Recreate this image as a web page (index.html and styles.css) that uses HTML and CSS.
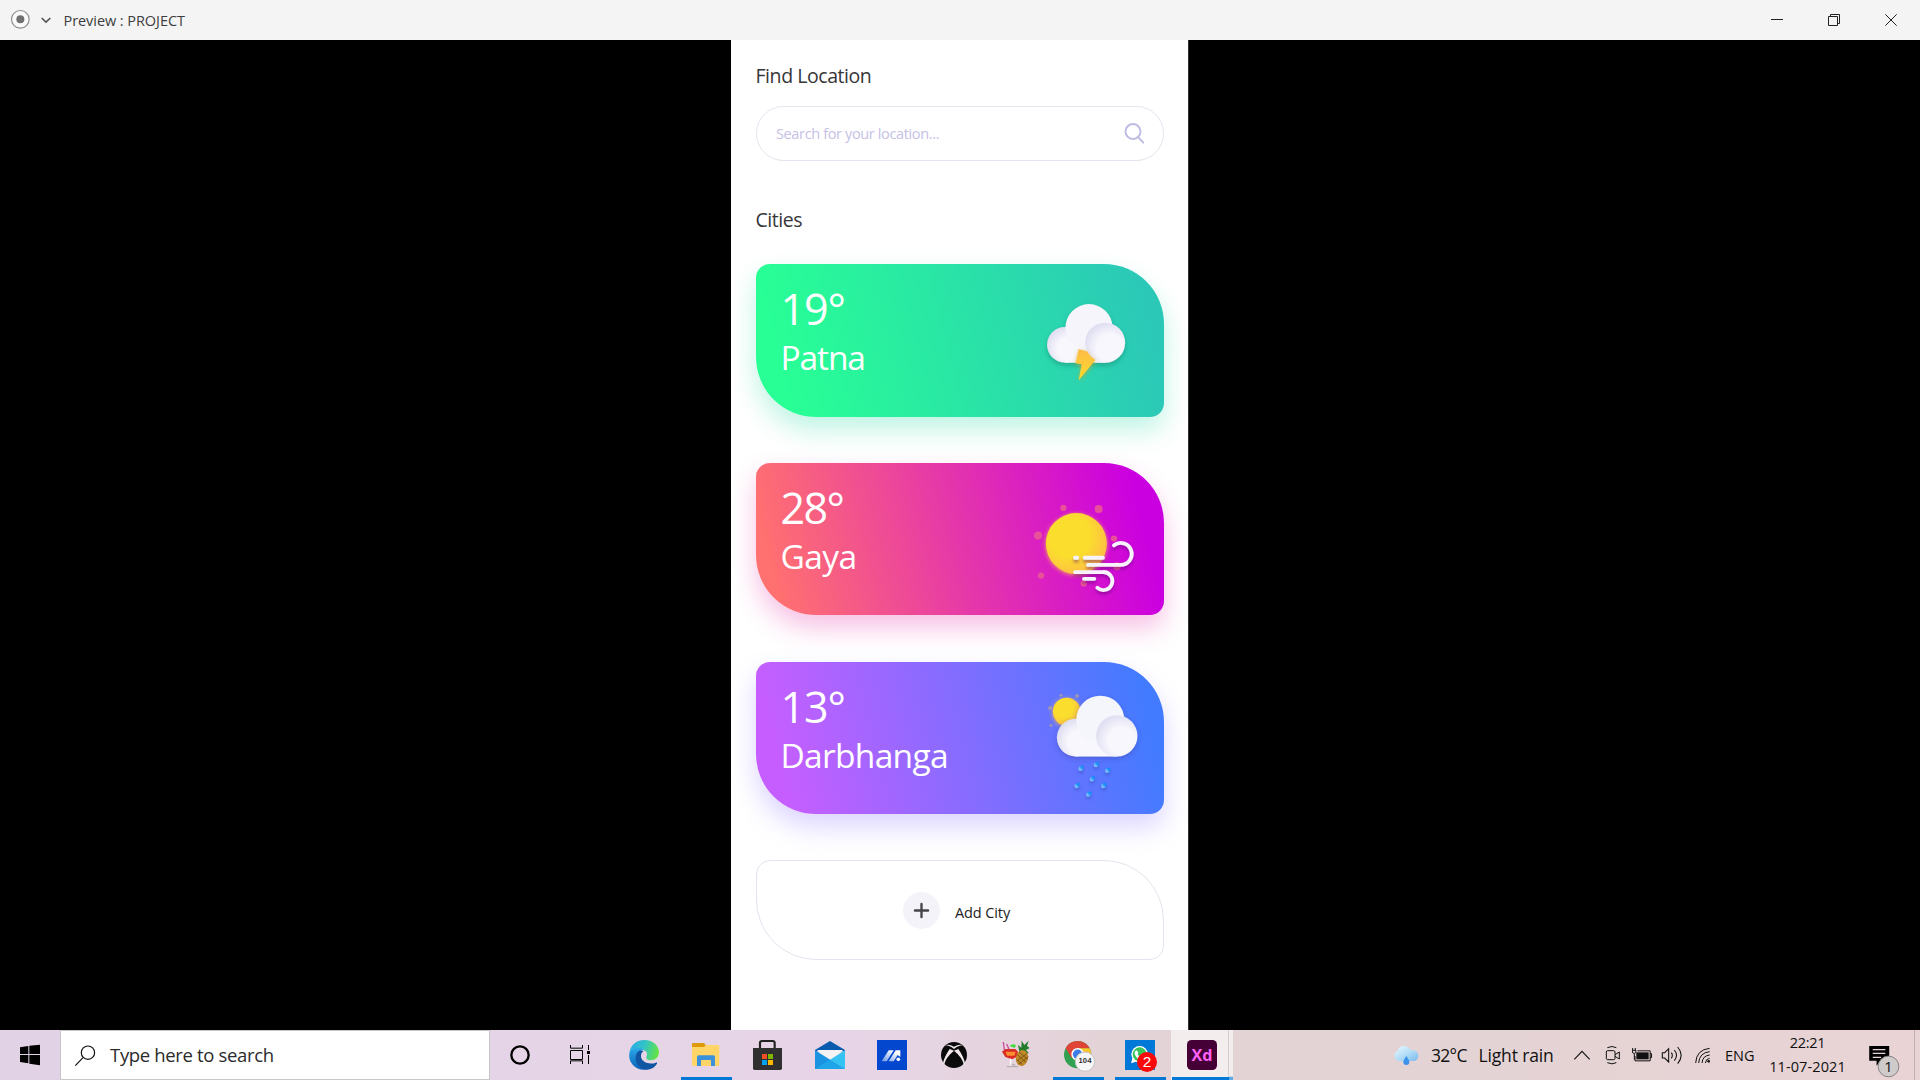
FILE: index.html
```html
<!DOCTYPE html>
<html lang="en">
<head>
<meta charset="utf-8">
<title>Preview : PROJECT</title>
<link rel="stylesheet" href="styles.css">
</head>
<body>
<header class="titlebar">
  <svg class="titlebar-tools" viewBox="0 0 180 120">
    <circle cx="61" cy="58" r="26.5" fill="#fafafa" stroke="#8b8b8b" stroke-width="3.4"/>
    <circle cx="61" cy="58" r="12" fill="#707070"/>
    <path d="M125 54l13 12 13-12" fill="none" stroke="#555" stroke-width="5"/>
  </svg>
  <span class="titlebar-name">Preview : PROJECT</span>
  <svg class="window-controls" viewBox="0 0 600 120" fill="none" stroke="#222" stroke-width="3">
    <path d="M153 58.500H189"/>
    <path d="M325.500 49.500h27v27h-27zM331.500 49v-5.500h27v27h-5"/>
    <path d="M496 43l34 34M530 43l-34 34"/>
  </svg>
</header>

<main class="stage">
  <section class="phone">
    <h2 class="heading">Find Location</h2>
    <div class="search">
      <span class="search-hint">Search for your location...</span>
      <svg class="search-icon" viewBox="1197 257 69 69" fill="none" stroke="#bdbbe2" stroke-width="5.800" stroke-linecap="round">
        <circle cx="1227" cy="285.500" r="22.500"/><path d="M1243 303l15 16"/>
      </svg>
    </div>
    <h2 class="heading heading-cities">Cities</h2>

    <div class="cards">
      <article class="card card-green">
        <div class="card-text"><div class="temp">19°</div><div class="city city-patna">Patna</div></div>
        <svg class="card-icon" viewBox="900 42 360 458">
          <defs>
            <radialGradient id="puff" cx=".62" cy=".62" r=".65"><stop offset=".5" stop-color="#f8f7fd"/><stop offset="1" stop-color="#dfdef1"/></radialGradient>
            <linearGradient id="bolt" x1="0" y1="0" x2="0" y2="1"><stop offset="0" stop-color="#fdbb45"/><stop offset="1" stop-color="#fbdc2c"/></linearGradient>
            <filter id="soft" x="-30%" y="-30%" width="160%" height="160%"><feDropShadow dx="0" dy="8" stdDeviation="8" flood-color="#16725f" flood-opacity=".42"/></filter>
            <filter id="boltglow" x="-60%" y="-40%" width="220%" height="180%"><feDropShadow dx="0" dy="4" stdDeviation="6" flood-color="#d3a328" flood-opacity=".7"/></filter>
          </defs>
          <g filter="url(#soft)" fill="#f6f5fc">
            <circle cx="1022.500" cy="284.500" r="53.500" fill="url(#puff)"/>
            <path d="M1022 270h122v68.500h-122z" fill="#f8f7fd"/>
            <circle cx="1095" cy="233" r="70.500"/>
            <circle cx="1143.500" cy="278.500" r="60" fill="url(#puff)"/>
          </g>
          <path d="M1064 298l25 6 10 14 15 12-50 61 9-48-18-3z" fill="url(#bolt)" filter="url(#boltglow)"/>
        </svg>
      </article>

      <article class="card card-pink">
        <div class="card-text"><div class="temp temp-wide">28°</div><div class="city city-gaya">Gaya</div></div>
        <svg class="card-icon" viewBox="900 39 360 458">
          <defs>
            <radialGradient id="sun" cx=".38" cy=".38" r=".72"><stop offset=".48" stop-color="#fbdd2e"/><stop offset="1" stop-color="#feb848"/></radialGradient>
            <filter id="sunglow" x="-30%" y="-30%" width="160%" height="160%"><feDropShadow dx="0" dy="3" stdDeviation="7" flood-color="#fdb844" flood-opacity=".9"/></filter>
            <filter id="windshade" x="-20%" y="-20%" width="140%" height="150%"><feDropShadow dx="0" dy="8" stdDeviation="5" flood-color="#5b1070" flood-opacity=".45"/></filter>
          </defs>
          <g fill="#ea5694" fill-opacity=".9">
            <circle cx="1018" cy="174" r="9.500"/><circle cx="1124" cy="177" r="12"/><circle cx="942" cy="257" r="12"/>
            <circle cx="1170" cy="266" r="9.500"/><circle cx="951" cy="377" r="9.500"/><circle cx="1179" cy="349" r="12"/><circle cx="1079" cy="401" r="9.500"/>
          </g>
          <circle cx="1057" cy="281" r="91.500" fill="url(#sun)" filter="url(#sunglow)"/>
          <g fill="none" stroke="#f6f3fc" stroke-width="11.500" stroke-linecap="round" filter="url(#windshade)">
            <path d="M1053 323.500h7M1082 323.500h55M1092 345h98a33 33 0 1 0-20-59M1053 366.500h84a27 27 0 1 1-17 47M1080 387h31"/>
          </g>
        </svg>
      </article>

      <article class="card card-violet">
        <div class="card-text"><div class="temp">13°</div><div class="city city-darbhanga">Darbhanga</div></div>
        <svg class="card-icon" viewBox="900 35 360 458">
          <defs>
            <filter id="cloudshade" x="-30%" y="-30%" width="160%" height="160%"><feDropShadow dx="0" dy="6" stdDeviation="8" flood-color="#3b3b9a" flood-opacity=".4"/></filter>
            <linearGradient id="drop" x1="0" y1="1" x2="1" y2="0"><stop offset="0" stop-color="#9bd4f8"/><stop offset=".45" stop-color="#55aaf8"/><stop offset=".6" stop-color="#1a90f8"/><stop offset="1" stop-color="#0a8cf5"/></linearGradient>
            <filter id="dropshade" x="-30%" y="-30%" width="160%" height="170%"><feDropShadow dx="0" dy="7" stdDeviation="4" flood-color="#2b3fa8" flood-opacity=".45"/></filter>
            <path id="rain" d="M8-10c2 8 1 18-8 18a7.500 7.500 0 0 1-3-14c4-2 7 0 11-4z"/>
          </defs>
          <g fill="#b4a39a" fill-opacity=".7"><circle cx="1011" cy="135" r="4.500"/><circle cx="1059" cy="137" r="6"/><circle cx="978" cy="173" r="6"/><circle cx="981" cy="226" r="4.500"/></g>
          <circle cx="1028" cy="184" r="41.500" fill="url(#sun)" filter="url(#sunglow)"/>
          <g filter="url(#cloudshade)" fill="#f5f5fc">
            <circle cx="1055" cy="262" r="56.500" fill="url(#puff)"/>
            <path d="M1055 240h124v78.500h-124z" fill="#f8f7fd"/>
            <circle cx="1129" cy="208" r="72"/>
            <circle cx="1178.500" cy="257" r="62" fill="url(#puff)"/>
          </g>
          <g fill="url(#drop)" filter="url(#dropshade)">
            <use href="#rain" x="1070" y="354"/><use href="#rain" x="1116" y="343"/><use href="#rain" x="1150" y="360"/><use href="#rain" x="1104" y="386"/>
            <use href="#rain" x="1058" y="406"/><use href="#rain" x="1138" y="406"/><use href="#rain" x="1093" y="432"/>
          </g>
        </svg>
      </article>

      <div class="add-card">
        <svg class="add-icon" viewBox="0 0 110 110"><circle cx="55" cy="55" r="55" fill="#f4f3f9"/><path d="M35.500 55h39M55 35.500v39" stroke="#454549" stroke-width="7" stroke-linecap="round"/></svg>
        <span class="add-label">Add City</span>
      </div>
    </div>
  </section>
</main>

<footer class="taskbar">
  <svg class="start" viewBox="0 18 180 150"><path d="M60 70l25-4v24H60zM88 65.500l32-3V90H88zM60 93h25v25l-25-4zM88 93h32v31l-32-5z"/></svg>
  <div class="task-search">
    <svg class="task-search-icon" viewBox="222 58 68 68" fill="none" stroke="#111" stroke-width="3.600"><circle cx="264" cy="84" r="20"/><path d="M249 99l-23 24"/></svg>
    <span class="task-search-text">Type here to search</span>
  </div>
  <nav class="apps">
    <svg class="app" viewBox="27 18 186 150"><circle cx="120" cy="93" r="26" fill="none" stroke="#000" stroke-width="7"/></svg>
    <svg class="app" viewBox="213 18 186 150"><path d="M271.500 63v9.500h36V63M271.500 79.500h36v27h-36zM271.500 120v-9.500h36v9.500M325.500 63v15M325.500 93v27" fill="none" stroke="#000" stroke-width="3"/><path d="M321 81h9v9h-9z"/></svg>
    <svg class="app" viewBox="399 18 186 150">
      <defs>
        <linearGradient id="edgetop" x1="0" y1=".3" x2="1" y2=".5"><stop offset="0" stop-color="#2ba9e8"/><stop offset=".5" stop-color="#32c5c5"/><stop offset="1" stop-color="#66e43f"/></linearGradient>
        <linearGradient id="edgeside" x1="0" y1="0" x2="0" y2="1"><stop offset="0" stop-color="#2aa6e8"/><stop offset="1" stop-color="#0b62b8"/></linearGradient>
      </defs>
      <path d="M448 87c4-26 23-39 45-39 27 0 44 18 44 37 0 15-12 24-24 24-11 0-17-5-13-12 5-10-3-19-16-21-14-2-27 3-36 11z" fill="url(#edgetop)"/>
      <path d="M448 87c8-13 31-19 44-9-10 1-18 8-18 18 0 20 12 32 28 40-28 8-59-16-54-49z" fill="url(#edgeside)"/>
      <path d="M478 80c-18 8-17 53 24 57 14-2 24-9 29-18 1-3-1-4-4-3-18 7-44-1-44-20 0-6 2-11 8-14-5-3-9-3-13-2z" fill="#1056a3"/>
    </svg>
    <svg class="app app-open" viewBox="585 18 186 150"><path d="M636 60q0-3 3-3h33l5 6v13h-41z" fill="#dc9a08"/><path d="M636 69h36l6-6h37q3 0 3 3v57q0 3-3 3h-76q-3 0-3-3z" fill="#ffd568"/><path d="M651 126V99q0-5 5-5h44q5 0 5 5v27h-12v-15q0-3-3-3h-24q-3 0-3 3v15z" fill="#3b92da"/></svg>
    <svg class="app" viewBox="771 18 186 150"><path d="M840 76V57q0-6 6-6h32q6 0 6 6v19" fill="none" stroke="#222" stroke-width="6.500"/><path d="M819 72h87v61q0 5-5 5h-77q-5 0-5-5z" fill="#303030"/><path d="M846 90h15v15h-15z" fill="#f04e24"/><path d="M864 90h15v15h-15z" fill="#7fb800"/><path d="M846 108h15v15h-15z" fill="#00a1ef"/><path d="M864 108h15v15h-15z" fill="#fdb900"/></svg>
    <svg class="app" viewBox="957 18 186 150"><path d="M1005 78l45-27 45 27v4h-90z" fill="#0a5bae"/><path d="M1011 78h78l-30 29h-20z" fill="#f4f2f2"/><path d="M1005 79l90 56h-90z" fill="#1b93e0"/><path d="M1095 79v56L1050 107z" fill="#35c3f3"/><path d="M1005 135l45-28 45 28z" fill="#1fa5e8"/></svg>
    <svg class="app" viewBox="3 18 186 150"><defs><linearGradient id="ma" x1="1" y1="0" x2="0" y2="1"><stop offset=".2" stop-color="#fff"/><stop offset="1" stop-color="#6d97e4"/></linearGradient></defs><path d="M51 48h90v90H51z" fill="#0447cf"/><path d="M65 112l21-33h15l-21 33zM86 112l21-33h14v20l-8-6-12 19z" fill="url(#ma)"/><circle cx="115" cy="106" r="5.500" fill="#fff"/></svg>
    <svg class="app" viewBox="189 18 186 150"><circle cx="282" cy="93" r="39" fill="#0b0b0b"/><path d="M254 64q12-2 28 11 16-13 28-11-12-5-28 4-16-9-28-4z" fill="#f3e9ee"/><path d="M282 80q-25 20-30 43l-3-3q1-17 20-45zM282 80q25 20 30 43l3-3q-1-17-20-45z" fill="#f3e9ee"/></svg>
    <svg class="app" viewBox="375 18 186 150">
      <path d="M440 128h34M452 120l14 4" stroke="#b9b0b4" stroke-width="4"/>
      <path d="M426 83l10-8h30l8 8-4 16-14 7-20-7z" fill="#d92c22"/><path d="M437 83h30l-4 12h-22z" fill="#fb8e31"/><path d="M452 104v20" stroke="#fff" stroke-width="4"/>
      <path d="M433 78l-3-24M447 76l-7-16" stroke="#cc4ca0" stroke-width="4"/><path d="M449 66q9-10 19-2l-4 8z" fill="#42d83e"/>
      <path d="M478 83l-4-20 10 8 1-21 8 13 13-13-5 16 8 6-11 6 9 10z" fill="#237c2c"/>
      <ellipse cx="486" cy="102" rx="18" ry="24" fill="#c08a28" transform="rotate(12 486 102)"/><path d="M472 92l26 23M477 84l26 22M470 106l17 16M502 88l-30 22M505 98l-29 22" stroke="#6f4b14" stroke-width="2.500"/>
    </svg>
    <svg class="app app-open" viewBox="561 18 186 150">
      <circle cx="653" cy="92" r="41" fill="#31a050"/><path d="M617 72a41 41 0 0 1 72 1h-36l-18 30z" fill="#df4436"/><path d="M653 73h36a41 41 0 0 1-34 60l18-30z" fill="#fbc42a"/>
      <circle cx="653" cy="91" r="19" fill="#fff"/><circle cx="653" cy="91" r="14.500" fill="#3d7de8"/>
      <circle cx="675" cy="113" r="29" fill="#f6f6f6" stroke="#c7c3c4" stroke-width="3"/><text class="badge-104" x="675" y="117" text-anchor="middle">104</text>
    </svg>
    <svg class="app app-open" viewBox="747 18 186 150"><path d="M795 48h90v90h-90z" fill="#0078d7"/><circle cx="839" cy="91" r="25" fill="#fff"/><path d="M813 118l6-21 13 15z" fill="#fff"/><circle cx="839" cy="91" r="21" fill="#38c458"/><path d="M830 79l5 7-2 5q4 8 12 12l5-3 6 5q-4 8-13 5-13-5-19-20-1-9 6-11z" fill="#fff"/><circle cx="861" cy="114" r="30" fill="#f90909"/><text class="badge-2" x="861" y="130" text-anchor="middle">2</text></svg>
    <div class="xd-slot">
      <svg class="app app-active" viewBox="933 18 186 150"><rect x="981" y="48" width="90" height="90" rx="14" fill="#450135"/><text class="xd" x="1026" y="110" text-anchor="middle" textLength="63" lengthAdjust="spacingAndGlyphs">Xd</text><path d="M1105.500 18v140" stroke="#c6bbbd" stroke-width="2"/><path d="M1107 158h12v10h-12z" fill="#5ea9e6"/></svg>
    </div>
  </nav>
  <div class="tray">
    <svg class="tray-weather" viewBox="-9 6 81 150">
      <defs><linearGradient id="tcloud" x1="0" y1="0" x2="1" y2="1"><stop offset="0" stop-color="#e9f8ff"/><stop offset=".5" stop-color="#b5def7"/><stop offset="1" stop-color="#78b9ee"/></linearGradient></defs>
      <path d="M12 99a16 16 0 0 1-3-31c1-17 34-19 38-1 9-3 23 3 23 16 0 10-8 17-17 16z" fill="url(#tcloud)"/><path d="M34 84q-9 13-9 18a9 9 0 0 0 18 0q0-5-9-18z" fill="#3b93ea"/>
    </svg>
    <span class="tray-temp">32°C</span>
    <span class="tray-rain">Light rain</span>
    <svg class="tray-chevron" viewBox="531 6 60 150" fill="none" stroke="#111" stroke-width="3.200"><path d="M538 94l23-24 23 24"/></svg>
    <svg class="tray-cam" viewBox="624 6 60 150" fill="none" stroke="#111" stroke-width="3"><rect x="634" y="68" width="26" height="27" rx="4"/><path d="M660 80l13-8v21l-13-8M637 59q14-7 27 0M637 104q14 7 27 0"/></svg>
    <svg class="tray-battery" viewBox="705 6 75 150" fill="none" stroke="#111" stroke-width="3"><path d="M727 68.500h38.500v30H720V84M765 77h4.500v12H765M713 60v7M721 60v7M712.500 67h10v7q-5 5-10 0zM718 78v17"/><path d="M724 73h37v21h-37z" fill="#111" stroke="none"/></svg>
    <svg class="tray-speaker" viewBox="795 6 75 150" fill="none" stroke="#111" stroke-width="3.200"><path d="M802 74h7l12-12v40l-12-12h-7zM829 74q6 8 0 17M838 66q13 16 0 32M848 57q21 25 0 50"/></svg>
    <svg class="tray-wifi" viewBox="894 6 60 150" fill="none" stroke="#111" stroke-width="3"><path d="M902 105q2-40 42-44M911 105q2-31 33-34M921 105q2-22 23-24M931 105q2-13 13-14"/><circle cx="941" cy="100" r="4" fill="#111" stroke="none"/></svg>
    <span class="tray-lang">ENG</span>
    <div class="clock"><div class="clock-time">22:21</div><div class="clock-date">11-07-2021</div></div>
    <svg class="tray-notice" viewBox="1411 17.100 102.600 142.500"><path d="M1423 63h57v42h-25l-11 14v-14h-21z"/><path d="M1433 73h36M1433 84h36M1433 95h24" stroke="#e8d4d6" stroke-width="3.500"/><circle cx="1478" cy="121" r="29.500" fill="#cfcbcb" stroke="#858080" stroke-width="2.800"/><text class="notice-count" x="1478" y="136" text-anchor="middle">1</text></svg>
    <div class="show-desktop"></div>
  </div>
</footer>
</body>
</html>
```
FILE: styles.css
```css
* { box-sizing: border-box; }
body {
  margin: 0;
  width: 1920px;
  height: 1080px;
  overflow: hidden;
  display: flex;
  flex-direction: column;
  background: #000;
  color: #222;
  font-family: "Open Sans", "Noto Sans", sans-serif;
  white-space: nowrap;
}
svg { display: block; flex: none; }

/* Title bar */
.titlebar { height: 40px; flex: none; display: flex; align-items: center; background: #f4f4f4; }
.titlebar-tools { width: 60px; height: 40px; }
.titlebar-name { margin-left: 3.5px; font-size: 14.5px; letter-spacing: -0.06px; color: #3d3d3d; }
.window-controls { width: 200px; height: 40px; margin-left: auto; }

/* Phone preview */
.stage { height: 990px; flex: none; display: flex; padding-left: 731px; }
.phone { width: 458px; padding: 21px 25px 0 24.5px; background: #fff; border-right: 1px solid #333; overflow: hidden; }
.heading { margin: 0; font-size: 19.5px; line-height: 30px; font-weight: 400; letter-spacing: -0.44px; color: #363638; }
.search {
  width: 408.5px;
  height: 55px;
  margin-top: 15px;
  padding: 0 17px 0 19.5px;
  display: flex;
  align-items: center;
  justify-content: space-between;
  border: 1.5px solid #e4e3ee;
  border-radius: 28px;
}
.search-hint { font-size: 14.5px; letter-spacing: -0.36px; color: #c4c1e5; }
.search-icon { width: 23px; height: 23px; }
.heading-cities { margin-top: 44px; letter-spacing: -0.45px; }

.cards { display: flex; flex-direction: column; gap: 46.3px; margin-top: 29px; }
.card {
  width: 408.5px;
  height: 152.5px;
  display: flex;
  justify-content: space-between;
  padding: 20px 20px 0 25px;
  border-radius: 14px 60px 14px 60px;
  color: #fff;
}
.card-green { background: linear-gradient(76deg, #28ff95 8%, #2bc8b8 94%); box-shadow: 0 13px 26px rgba(43, 220, 165, .3); }
.card-pink { background: linear-gradient(76deg, #ff7070 6%, #e639a8 48%, #cb00e0 92%); box-shadow: 0 13px 26px rgba(228, 50, 170, .3); }
.card-violet { background: linear-gradient(76deg, #c65eff 8%, #427bff 94%); box-shadow: 0 13px 26px rgba(130, 105, 255, .28); }
.temp { font-size: 43px; line-height: 50px; letter-spacing: -1.1px; }
.temp-wide { letter-spacing: -1.6px; }
.city { margin-top: 1px; font-size: 33.5px; line-height: 44px; }
.city-patna { letter-spacing: -1.1px; }
.city-gaya { letter-spacing: -0.6px; }
.city-darbhanga { letter-spacing: -0.7px; }
.card-icon { width: 120px; height: 152.5px; margin-top: -20px; }

.add-card {
  width: 408.5px;
  height: 99.5px;
  display: flex;
  align-items: center;
  padding-left: 146px;
  border: 1.5px solid #e4e3ee;
  border-radius: 14px 60px 14px 60px;
}
.add-icon { width: 37px; height: 37px; }
.add-label { margin: 5px 0 0 15.5px; font-size: 14.5px; letter-spacing: -0.1px; }

/* Taskbar */
.taskbar {
  height: 50px;
  flex: none;
  display: flex;
  background: linear-gradient(90deg, #e2d2e6 0, #e7d5e7 850px, #e3d3d6 1120px, #e3d3d4 1400px, #e9d3d5 1920px);
  color: #111;
}
.start { width: 60px; height: 50px; }
.task-search { width: 430px; display: flex; align-items: center; padding-left: 13px; background: #fff; border: 1px solid #c9c6ca; }
.task-search-icon { width: 22.600px; height: 22.600px; }
.task-search-text { margin: -2px 0 0 13.5px; font-size: 18.5px; letter-spacing: -0.35px; color: #2b2b2b; }
.apps { display: flex; margin-left: -1px; }
.app { width: 62px; height: 50px; }
.app-open { background: linear-gradient(#0078d7, #0078d7) 6px 100% / 51px 3px no-repeat; }
.xd-slot { background: #f3edee; }
.app-active { background: linear-gradient(#0078d7, #0078d7) 1px 100% / 61px 3px no-repeat; }
.badge-104 { font: bold 23px "Liberation Sans", sans-serif; fill: #333; }
.badge-2 { font: 46px "Liberation Sans", sans-serif; fill: #fff; }
.xd { font: bold 48px "Open Sans", sans-serif; fill: #ff61f6; }

.tray { flex: 1; display: flex; align-items: center; margin-left: 159px; }
.tray-weather { width: 27px; height: 50px; }
.tray-temp { width: 49px; padding-left: 12px; font-size: 17.5px; letter-spacing: -0.7px; }
.tray-rain { width: 104px; padding-left: 10.500px; font-size: 17.5px; letter-spacing: -0.15px; }
.tray-chevron { width: 20px; height: 50px; }
.tray-cam { width: 20px; height: 50px; margin-left: 11px; }
.tray-battery { width: 25px; height: 50px; margin-left: 7px; }
.tray-speaker { width: 25px; height: 50px; margin-left: 5px; }
.tray-wifi { width: 20px; height: 50px; margin-left: 8px; }
.tray-lang { width: 52px; padding-left: 12px; font-size: 14.5px; }
.clock { width: 85px; text-align: center; font-size: 14.5px; line-height: 24px; }
.clock-time { letter-spacing: -0.3px; }
.clock-date { letter-spacing: 0.1px; }
.tray-notice { width: 36px; height: 50px; margin-left: 15px; }
.notice-count { font: 42px "Open Sans", sans-serif; fill: #111; }
.show-desktop { width: 6px; height: 50px; margin-left: auto; border-left: 1px solid #bfb0b2; }
```
